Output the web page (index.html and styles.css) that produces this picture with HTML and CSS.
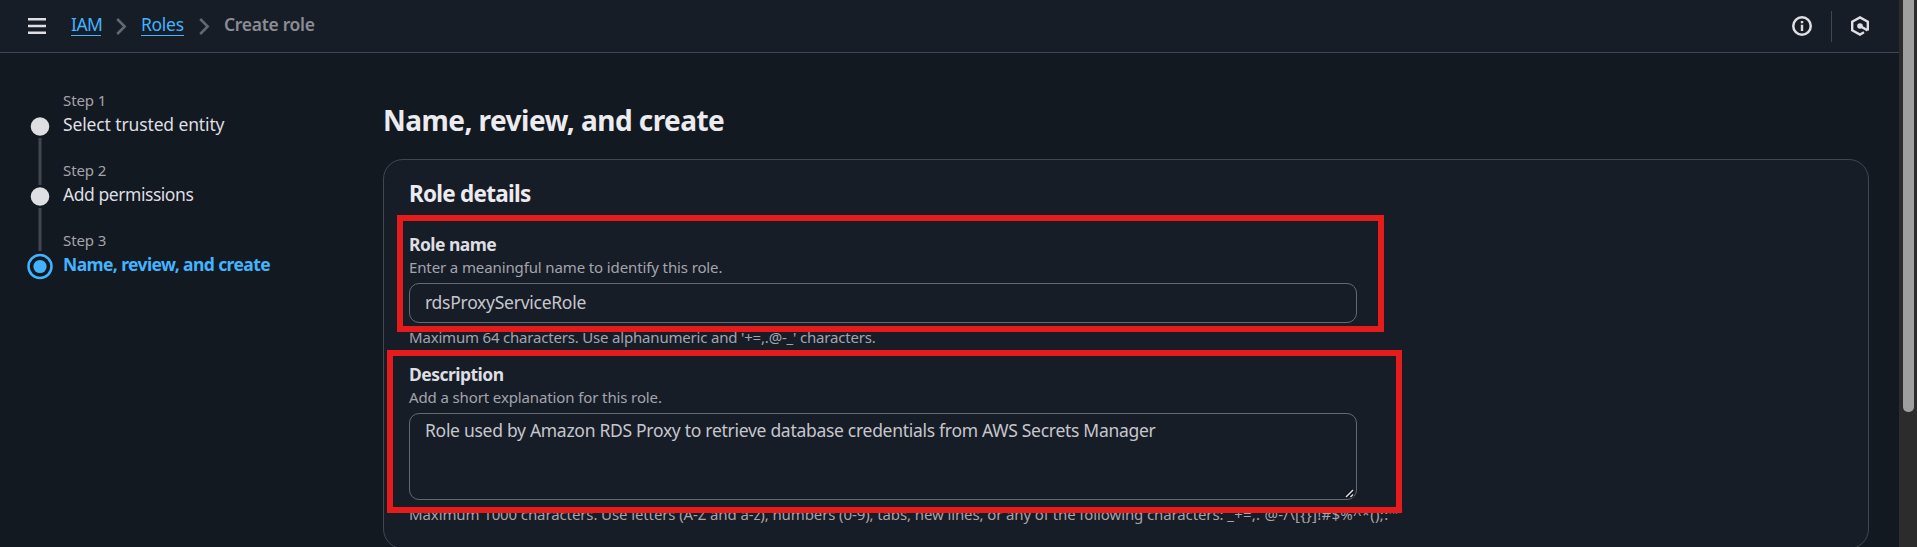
FILE: index.html
```html
<!DOCTYPE html>
<html lang="en">
<head>
<meta charset="utf-8">
<title>Create role | IAM</title>
<link rel="stylesheet" href="styles.css">
</head>
<body>
<div class="viewport">
  <div class="app">
    <header class="topbar">
      <svg class="menu" width="18" height="16" viewBox="0 0 18 16"><path d="M0 1.25h18M0 8h18M0 14.75h18" stroke="#dedee3" stroke-width="2.5"/></svg>
      <nav class="crumbs">
        <a class="link link-iam">IAM</a>
        <svg class="chev" width="11" height="17" viewBox="0 0 11 17"><path d="M1.2 1l7.5 7.5L1.2 16" fill="none" stroke="#656871" stroke-width="2.5"/></svg>
        <a class="link link-roles">Roles</a>
        <svg class="chev" width="11" height="17" viewBox="0 0 11 17"><path d="M1.2 1l7.5 7.5L1.2 16" fill="none" stroke="#656871" stroke-width="2.5"/></svg>
        <span class="current">Create role</span>
      </nav>
      <div class="tools">
        <svg width="20" height="20" viewBox="0 0 20 20"><circle cx="10" cy="10" r="8.75" fill="none" stroke="#dedee3" stroke-width="2.5"/><path d="M8.8 5h2.4v2.3H8.8zM8.8 8.7h2.4V15H8.8z" fill="#dedee3"/></svg>
        <span class="divider"></span>
        <svg width="20" height="20" viewBox="0 0 20 20"><path d="M17.8 14.6V5.7L10 1.4 2.2 5.7v8.6L10 18.6l4-2.3M10 10l7.6 4.4" fill="none" stroke="#dedee3" stroke-width="2.4"/><circle cx="10" cy="10" r="2.8" fill="#dedee3"/></svg>
      </div>
    </header>
    <div class="content">
      <ol class="steps">
        <li class="step">
          <svg class="marker" width="26" height="70" viewBox="0 0 26 70"><circle cx="13" cy="36.5" r="9.3" fill="#dedee3"/><path d="M13 48v47" stroke="#424650" stroke-width="3"/></svg>
          <div><div class="step-no">Step 1</div><div class="step-title t1">Select trusted entity</div></div>
        </li>
        <li class="step">
          <svg class="marker" width="26" height="70" viewBox="0 0 26 70"><circle cx="13" cy="36.5" r="9.3" fill="#dedee3"/><path d="M13 48v43" stroke="#424650" stroke-width="3"/></svg>
          <div><div class="step-no">Step 2</div><div class="step-title t2">Add permissions</div></div>
        </li>
        <li class="step">
          <svg class="marker" width="26" height="70" viewBox="0 0 26 70"><circle cx="13" cy="36.5" r="11.5" fill="none" stroke="#42b4ff" stroke-width="2.5"/><circle cx="13" cy="36.5" r="6.6" fill="#42b4ff"/></svg>
          <div><div class="step-no">Step 3</div><div class="step-title active">Name, review, and create</div></div>
        </li>
      </ol>
      <main class="main">
        <h1 class="title">Name, review, and create</h1>
        <section class="card">
          <h2 class="card-title">Role details</h2>
          <div class="field">
            <div class="label l-name">Role name</div>
            <div class="hint h-name">Enter a meaningful name to identify this role.</div>
            <div class="input v-name">rdsProxyServiceRole</div>
            <div class="hint constraint c-name">Maximum 64 characters. Use alphanumeric and '+=,.@-_' characters.</div>
            <div class="mark mark-name"></div>
          </div>
          <div class="field">
            <div class="label l-desc">Description</div>
            <div class="hint h-desc">Add a short explanation for this role.</div>
            <div class="input area v-desc">Role used by Amazon RDS Proxy to retrieve database credentials from AWS Secrets Manager
              <svg class="grip" width="9" height="9" viewBox="0 0 9 9"><path d="M1 8l7-7M5.5 8L8 5.5" stroke="#0b0f14" stroke-width="3.4"/><path d="M1 8l7-7M5.5 8L8 5.5" stroke="#dedee3" stroke-width="1.5"/></svg>
            </div>
            <div class="hint constraint c-desc">Maximum 1000 characters. Use letters (A-Z and a-z), numbers (0-9), tabs, new lines, or any of the following characters: <span class="symbols">_+=,. @-/\[{}]!#$%^*();:'"`</span></div>
            <div class="mark mark-desc"></div>
          </div>
        </section>
      </main>
    </div>
  </div>
  <div class="scrollbar"><div class="thumb"></div></div>
</div>
</body>
</html>
```
FILE: styles.css
```css
* { box-sizing: border-box; }
body { margin: 0; background: #131920; font-family: "Noto Sans", "Open Sans", sans-serif; font-size: 17.5px; line-height: 25px; color: #dedee3; }
.viewport { display: flex; width: 1917px; height: 547px; overflow: hidden; }
.app { width: 1899px; flex: none; }
.topbar { display: flex; align-items: center; height: 53px; padding: 0 29px 0 28px; background: #171d26; border-bottom: 1px solid #424650; }
.menu { flex: none; margin-right: 25px; }
.crumbs { display: flex; align-items: center; height: 52px; white-space: nowrap; }
.link { height: 24px; line-height: 25px; margin-top: -4px; color: #42b4ff; border-bottom: 1px solid #42b4ff; }
.link-iam { width: 30px; letter-spacing: -0.5px; }
.link-roles { width: 43px; letter-spacing: -0.3px; }
.chev { margin: 0 14px 0 15px; }
.current { color: #8c8c94; font-weight: 600; margin-top: -3px; letter-spacing: -0.3px; }
.tools { display: flex; align-items: center; margin-left: auto; }
.divider { width: 1px; height: 31px; margin: 0 18px 0 19px; background: #424650; }
.content { display: flex; }
.steps { list-style: none; margin: 0; padding: 37px 0 0 27px; width: 383px; flex: none; }
.step { display: flex; height: 70px; gap: 10px; white-space: nowrap; }
.marker { overflow: visible; flex: none; }
.step-no { font-size: 15px; line-height: 20px; margin-bottom: 2px; color: #a4a4ad; letter-spacing: -0.1px; }
.t1 { letter-spacing: -0.13px; }
.t2 { letter-spacing: -0.45px; }
.active { color: #42b4ff; font-weight: 700; letter-spacing: -0.6px; }
.main { width: 1486px; }
.title { margin: 0; padding-top: 50px; height: 106px; font-size: 28px; line-height: 35px; font-weight: 700; color: #ebebf0; white-space: nowrap; letter-spacing: -0.54px; }
.card { height: 390px; padding: 19px 25px; border: 1px solid #424650; border-radius: 20px; background: #171d26; }
.card-title { margin: 0 0 23px; font-size: 22.5px; line-height: 30px; font-weight: 700; color: #ebebf0; letter-spacing: -0.75px; }
.field { position: relative; margin-bottom: 15px; white-space: nowrap; }
.label { font-weight: 700; letter-spacing: -0.53px; }
.hint { font-size: 15px; line-height: 20px; color: #a4a4ad; letter-spacing: -0.12px; }
.input { width: 948px; height: 40px; margin-top: 6px; padding: 6px 15px; border: 1px solid #656871; border-radius: 10px; color: #c6c6cd; letter-spacing: -0.27px; }
.area { position: relative; height: 87px; padding-top: 4px; letter-spacing: -0.29px; }
.grip { position: absolute; right: 2px; bottom: 1px; }
.constraint { margin-top: 4px; }
.c-name { letter-spacing: -0.19px; }
.c-desc { letter-spacing: -0.11px; }
.symbols { letter-spacing: 0.25px; }
.mark { position: absolute; border: 6px solid #e61b1b; }
.mark-name { left: -12px; top: -17px; width: 987px; height: 117px; }
.mark-desc { left: -22px; top: -12px; width: 1015px; height: 163px; }
.scrollbar { width: 18px; flex: none; padding-left: 4px; background: #2c2c2c; }
.thumb { width: 11px; height: 412px; background: #9f9f9f; border-radius: 0 0 5px 5px; }
```
